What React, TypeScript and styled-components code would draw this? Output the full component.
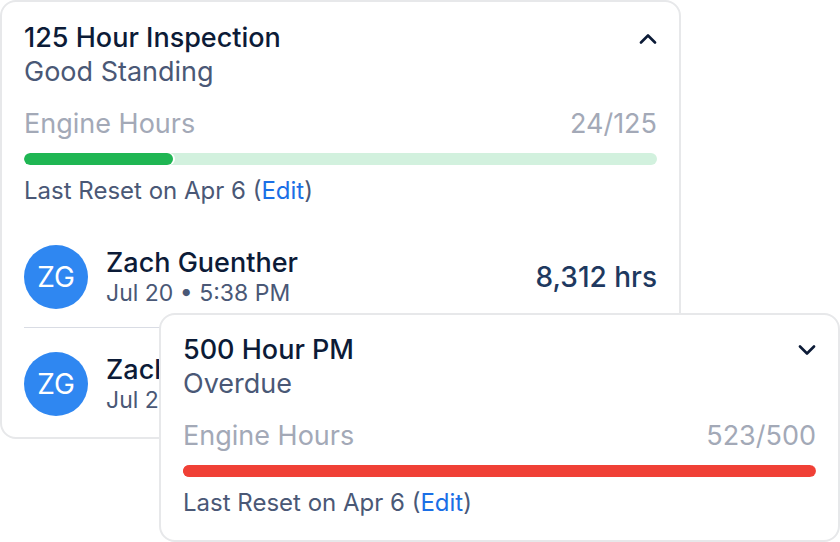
import React from "react";
import styled, { createGlobalStyle } from "styled-components";

const GlobalStyle = createGlobalStyle`
  html, body {
    margin: 0;
    padding: 0;
    background: #ffffff;
  }
  body {
    font-family: Inter, "Noto Sans", sans-serif;
    -webkit-font-smoothing: antialiased;
  }
`;

const Page = styled.div`
  position: relative;
  width: 840px;
  height: 542px;
  overflow: hidden;
`;

type CardProps = {
  $overlay?: boolean;
};

const Card = styled.div<CardProps>`
  box-sizing: border-box;
  width: 681px;
  background: #ffffff;
  border: 2px solid #e7e8ea;
  border-radius: 16px;
  padding: ${({ $overlay }) => ($overlay ? "18px 22px 22px" : "19px 22px 0")};
  ${({ $overlay }) =>
    $overlay
      ? `
    position: absolute;
    left: 159px;
    top: 313px;
    height: 229px;
  `
      : `
    height: 439px;
  `}
`;

const Header = styled.div`
  display: flex;
  justify-content: space-between;
  align-items: flex-start;
`;

const Titles = styled.div`
  display: flex;
  flex-direction: column;
`;

const Title = styled.div`
  font-size: 27px;
  line-height: 34px;
  font-weight: 500;
  color: #0c1b37;
`;

const Status = styled.div`
  font-size: 27px;
  line-height: 34px;
  color: #4a5876;
`;

const Chevron = styled.svg`
  width: 18px;
  height: 11px;
  margin-top: 12px;
  margin-right: 0;
`;

const MeterRow = styled.div`
  display: flex;
  justify-content: space-between;
  margin-top: 18px;
  font-size: 27px;
  line-height: 34px;
  color: #a3a9b7;
`;

const Track = styled.div<{ $bg: string }>`
  position: relative;
  height: 12px;
  margin-top: 12px;
  border-radius: 6px;
  background: ${({ $bg }) => $bg};
  overflow: hidden;
`;

const Fill = styled.div<{ $color: string }>`
  height: 100%;
  border-radius: 6px;
  background: ${({ $color }) => $color};
  box-shadow: 2px 0 0 #ffffff;
`;

const ResetLine = styled.div`
  margin-top: 11px;
  font-size: 24px;
  line-height: 30px;
  color: #4a5876;
`;

const EditLink = styled.a`
  color: #1b6fe6;
  text-decoration: none;
  cursor: pointer;
`;

const Entries = styled.div`
  margin-top: 15px;
`;

const Entry = styled.div`
  display: flex;
  align-items: center;
  gap: 18px;
  padding: 24px 0 18px;
  & + & {
    border-top: 1px solid #d9dce4;
  }
`;

const Avatar = styled.div`
  flex: none;
  width: 64px;
  height: 64px;
  border-radius: 50%;
  background: #2f87f1;
  color: #ffffff;
  display: flex;
  align-items: center;
  justify-content: center;
  font-size: 28px;
  font-weight: 400;
`;

const Person = styled.div`
  flex: 1;
  display: flex;
  flex-direction: column;
`;

const Name = styled.div`
  font-size: 27px;
  line-height: 32px;
  font-weight: 500;
  color: #0c1b37;
`;

const When = styled.div`
  font-size: 23px;
  line-height: 28px;
  color: #4a5876;
`;

const Hours = styled.div`
  font-size: 28px;
  font-weight: 500;
  color: #1e3960;
`;

type Task = {
  title: string;
  status: string;
  used: number;
  total: number;
  fillPct: number;
  color: string;
  track: string;
  open: boolean;
};

const ChevronIcon = ({ open }: { open: boolean }) => (
  <Chevron viewBox="0 0 18 11" fill="none">
    <polyline
      points={open ? "2,9.5 9,2.5 16,9.5" : "2,1.5 9,8.5 16,1.5"}
      stroke="#0c1b37"
      strokeWidth="2.6"
      strokeLinecap="round"
      strokeLinejoin="round"
    />
  </Chevron>
);

const TaskBody = ({ task }: { task: Task }) => (
  <>
    <Header>
      <Titles>
        <Title>{task.title}</Title>
        <Status>{task.status}</Status>
      </Titles>
      <ChevronIcon open={task.open} />
    </Header>
    <MeterRow>
      <span>Engine Hours</span>
      <span>
        {task.used}/{task.total}
      </span>
    </MeterRow>
    <Track $bg={task.track}>
      <Fill $color={task.color} style={{ width: `${task.fillPct}%` }} />
    </Track>
    <ResetLine>
      Last Reset on Apr 6 (<EditLink>Edit</EditLink>)
    </ResetLine>
  </>
);

const inspection: Task = {
  title: "125 Hour Inspection",
  status: "Good Standing",
  used: 24,
  total: 125,
  fillPct: 23.6,
  color: "#1fb653",
  track: "#d2f1de",
  open: true,
};

const pm: Task = {
  title: "500 Hour PM",
  status: "Overdue",
  used: 523,
  total: 500,
  fillPct: 100,
  color: "#f04036",
  track: "#f04036",
  open: false,
};

const logs = [
  { initials: "ZG", name: "Zach Guenther", when: "Jul 20 • 5:38 PM", hours: "8,312 hrs" },
  { initials: "ZG", name: "Zach Guenther", when: "Jul 20 • 5:38 PM", hours: "8,312 hrs" },
];

export default function App() {
  return (
    <Page>
      <GlobalStyle />
      <Card>
        <TaskBody task={inspection} />
        <Entries>
          {logs.map((log, i) => (
            <Entry key={i}>
              <Avatar>{log.initials}</Avatar>
              <Person>
                <Name>{log.name}</Name>
                <When>{log.when}</When>
              </Person>
              <Hours>{log.hours}</Hours>
            </Entry>
          ))}
        </Entries>
      </Card>
      <Card $overlay>
        <TaskBody task={pm} />
      </Card>
    </Page>
  );
}
